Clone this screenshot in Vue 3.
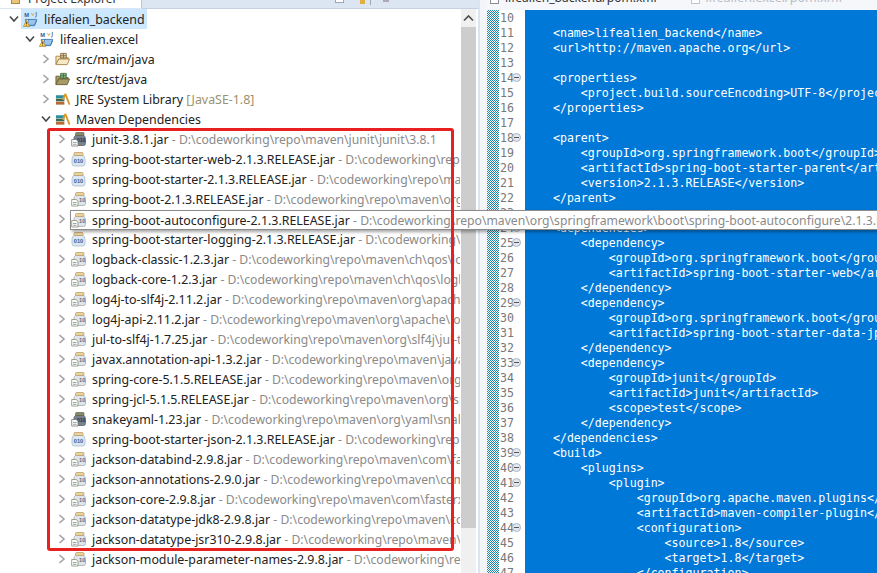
<script setup>
const P = 'D:\\codeworking\\repo\\maven\\'
const tree = [
  { depth: 0, open: true, icon: 'project', name: 'lifealien_backend', selected: true },
  { depth: 1, open: true, icon: 'project', name: 'lifealien.excel' },
  { depth: 2, icon: 'srcMain', name: 'src/main/java' },
  { depth: 2, icon: 'srcTest', name: 'src/test/java' },
  { depth: 2, icon: 'library', name: 'JRE System Library', tag: '[JavaSE-1.8]' },
  { depth: 2, open: true, icon: 'library', name: 'Maven Dependencies' },
  ...[
    ['dark', 'junit-3.8.1.jar', 'junit\\junit\\3.8.1'],
    ['plain', 'spring-boot-starter-web-2.1.3.RELEASE.jar', 'org\\springframework\\boot'],
    ['plain', 'spring-boot-starter-2.1.3.RELEASE.jar', 'org\\springframework\\boot'],
    ['page', 'spring-boot-2.1.3.RELEASE.jar', 'org\\springframework\\boot'],
    ['page', 'spring-boot-autoconfigure-2.1.3.RELEASE.jar', 'org\\springframework\\boot'],
    ['plain', 'spring-boot-starter-logging-2.1.3.RELEASE.jar', 'org\\springframework\\boot'],
    ['page', 'logback-classic-1.2.3.jar', 'ch\\qos\\logback'],
    ['page', 'logback-core-1.2.3.jar', 'ch\\qos\\logback'],
    ['page', 'log4j-to-slf4j-2.11.2.jar', 'org\\apache\\logging'],
    ['page', 'log4j-api-2.11.2.jar', 'org\\apache\\logging'],
    ['page', 'jul-to-slf4j-1.7.25.jar', 'org\\slf4j\\jul-to-slf4j'],
    ['page', 'javax.annotation-api-1.3.2.jar', 'javax\\annotation'],
    ['page', 'spring-core-5.1.5.RELEASE.jar', 'org\\springframework'],
    ['page', 'spring-jcl-5.1.5.RELEASE.jar', 'org\\springframework'],
    ['dark', 'snakeyaml-1.23.jar', 'org\\yaml\\snakeyaml'],
    ['plain', 'spring-boot-starter-json-2.1.3.RELEASE.jar', 'org\\springframework\\boot'],
    ['page', 'jackson-databind-2.9.8.jar', 'com\\fasterxml\\jackson'],
    ['page', 'jackson-annotations-2.9.0.jar', 'com\\fasterxml\\jackson'],
    ['page', 'jackson-core-2.9.8.jar', 'com\\fasterxml\\jackson'],
    ['page', 'jackson-datatype-jdk8-2.9.8.jar', 'com\\fasterxml\\jackson'],
    ['page', 'jackson-datatype-jsr310-2.9.8.jar', 'com\\fasterxml\\jackson'],
    ['page', 'jackson-module-parameter-names-2.9.8.jar', 'com\\fasterxml\\jackson'],
  ].map(([icon, name, path]) => ({ depth: 3, icon, name, path: P + path })),
]

const code = [
  [10, ''],
  [11, '    <name>lifealien_backend</name>'],
  [12, '    <url>http://maven.apache.org</url>'],
  [13, ''],
  [14, '    <properties>', true],
  [15, '        <project.build.sourceEncoding>UTF-8</project.build.sourceEncoding>'],
  [16, '    </properties>'],
  [17, ''],
  [18, '    <parent>', true],
  [19, '        <groupId>org.springframework.boot</groupId>'],
  [20, '        <artifactId>spring-boot-starter-parent</artifactId>'],
  [21, '        <version>2.1.3.RELEASE</version>'],
  [22, '    </parent>'],
  [23, ''],
  [24, '    <dependencies>', true],
  [25, '        <dependency>', true],
  [26, '            <groupId>org.springframework.boot</groupId>'],
  [27, '            <artifactId>spring-boot-starter-web</artifactId>'],
  [28, '        </dependency>'],
  [29, '        <dependency>', true],
  [30, '            <groupId>org.springframework.boot</groupId>'],
  [31, '            <artifactId>spring-boot-starter-data-jpa</artifactId>'],
  [32, '        </dependency>'],
  [33, '        <dependency>', true],
  [34, '            <groupId>junit</groupId>'],
  [35, '            <artifactId>junit</artifactId>'],
  [36, '            <scope>test</scope>'],
  [37, '        </dependency>'],
  [38, '    </dependencies>'],
  [39, '    <build>', true],
  [40, '        <plugins>', true],
  [41, '            <plugin>', true],
  [42, '                <groupId>org.apache.maven.plugins</groupId>'],
  [43, '                <artifactId>maven-compiler-plugin</artifactId>'],
  [44, '                <configuration>', true],
  [45, '                    <source>1.8</source>'],
  [46, '                    <target>1.8</target>'],
  [47, '                </configuration>'],
].map(([n, text, fold]) => ({ n, text, fold }))
</script>

<template>
  <div class="root">
    <svg class="defs" width="0" height="0" aria-hidden="true">
      <defs>
        <symbol id="i-chevron-r" viewBox="0 0 10 10">
          <path d="M2.5 1 L7 5 L2.5 9" fill="none" stroke="#a3a3a3" stroke-width="1.6" />
        </symbol>
        <symbol id="i-chevron-d" viewBox="0 0 10 10">
          <path d="M1 2.5 L5 7 L9 2.5" fill="none" stroke="#4a4a4a" stroke-width="1.6" />
        </symbol>
        <symbol id="i-project" viewBox="0 0 16 18">
          <path d="M2 9.5 H7 L8 11 H15 L12.5 16.5 H3.5 Z" fill="#e8f1fb" stroke="#3f79b5" />
          <path d="M6 9.5 H15 L12.5 16 H4 Z" fill="#9cc3ea" stroke="#3f79b5" />
          <text x="1" y="6.5" class="m">M</text>
          <path d="M9 2.5 L10.5 5 L12 2.5" fill="none" stroke="#d99a2b" stroke-width="1" />
          <path d="M14.5 1 V6 Q14.5 7 13 7" fill="none" stroke="#3f79b5" stroke-width="1" />
          <path d="M3.5 10.5 L7 17.5 H0 Z" fill="#f6cf55" stroke="#a8791c" stroke-width=".7" />
          <path d="M3.5 12.5 V15 M3.5 16 V16.8" stroke="#59400f" stroke-width="1" />
        </symbol>
        <symbol id="i-srcMain" viewBox="0 0 16 14">
          <path d="M1 12.5 V4 H5 L6 5.5 H14 V7 H4 Z" fill="#f6e3b2" stroke="#a98a4e" />
          <path d="M1 13 L4 7 H15.5 L13 13 Z" fill="#f8e9c4" stroke="#a98a4e" />
          <path d="M6 1 H12 V6 H6 Z M9 1 V6 M6 3.5 H12" fill="#e6cfa0" stroke="#7d6a44" stroke-width=".9" />
        </symbol>
        <symbol id="i-srcTest" viewBox="0 0 16 14">
          <path d="M1 12.5 V4 H5 L6 5.5 H14 V7 H4 Z" fill="#a89a66" stroke="#6d6238" />
          <path d="M1 13 L4 7 H15.5 L13 13 Z" fill="#a89a66" stroke="#6d6238" />
          <path d="M6 1 H12 V6 H6 Z M9 1 V6 M6 3.5 H12" fill="#90b67a" stroke="#3b6e46" stroke-width=".9" />
        </symbol>
        <symbol id="i-library" viewBox="0 0 16 14">
          <rect x="1" y="3" width="9" height="3" fill="#2f8f9e" />
          <rect x="1" y="6.5" width="9" height="3" fill="#3d6b52" />
          <rect x="1" y="10" width="9" height="3" fill="#b56a35" />
          <path d="M11 1.5 L15.5 13 M11 1.5 L8.5 8" stroke="#d99a2b" stroke-width="2" fill="none" />
        </symbol>
        <symbol id="i-plain" viewBox="0 0 15 15">
          <path d="M3 3.5 H12 Q14 5 14 8 V12 Q14 14.5 11.5 14.5 H3.5 Q1 14.5 1 12 V8 Q1 5 3 3.5 Z" fill="#dbe7f3" stroke="#a9b9c9" stroke-width=".8" />
          <rect x="3" y="1" width="9" height="3" rx="1" fill="#ecd29a" stroke="#b09a66" stroke-width=".7" />
          <text x="7.5" y="11.6" class="bin big" fill="#2d5d93">010</text>
        </symbol>
        <symbol id="i-page" viewBox="0 0 15 15">
          <path d="M5 3.5 H12.5 Q14.5 5 14.5 8 V12 Q14.5 14 12.5 14 H5 Q3 14 3 12 V6 Q3 5 5 3.5 Z" fill="#dfe5e8" stroke="#a4acb0" stroke-width=".8" />
          <rect x="4.5" y="1" width="8.5" height="3" rx="1" fill="#ecd29a" stroke="#b09a66" stroke-width=".7" />
          <text x="11.2" y="10.8" class="bin big" fill="#55748f">10</text>
          <path d="M.7 8 H5 L7 9.6 V14.5 H.7 Z" fill="#fffdf4" stroke="#8e8c78" stroke-width=".8" />
          <path d="M2 11 H5.5 M2 12.8 H5.5" stroke="#6b94b5" stroke-width=".8" />
        </symbol>
        <symbol id="i-dark" viewBox="0 0 15 15">
          <path d="M5 3.5 H12.5 Q14.5 5 14.5 8 V12 Q14.5 14 12.5 14 H5 Q3 14 3 12 V6 Q3 5 5 3.5 Z" fill="#79838b" stroke="#5b6369" stroke-width=".8" />
          <rect x="4.5" y="1" width="8.5" height="3" rx="1" fill="#8b8a6d" stroke="#5f5e45" stroke-width=".7" />
          <text x="10.2" y="10.8" class="bin" fill="#14355c">010</text>
          <path d="M.7 8 H5 L7 9.6 V14.5 H.7 Z" fill="#fffdf4" stroke="#777" stroke-width=".8" />
          <path d="M2 11 H5.5 M2 12.8 H5.5" stroke="#6b94b5" stroke-width=".8" />
        </symbol>
      </defs>
    </svg>

    <section class="left">
      <header class="left-top">
        <div class="tab">
          <i class="tab-ico"></i>
          <span class="tab-text">Project Explorer</span>
        </div>
        <div class="tab-band">
          <i class="tool box"></i>
          <i class="tool pen"></i>
          <i class="tool sep"></i>
          <i class="tool dot"></i>
        </div>
      </header>
      <div class="left-body">
        <div class="tree">
          <div v-for="row in tree" :key="row.name" class="row" :class="'d' + row.depth">
            <svg class="chev"><use :href="row.open ? '#i-chevron-d' : '#i-chevron-r'" /></svg>
            <div class="cell" :class="{ selected: row.selected }">
              <svg class="ico"><use :href="'#i-' + row.icon" /></svg>
              <span class="name">{{ row.name }}</span>
              <span v-if="row.tag" class="tag">&nbsp;{{ row.tag }}</span>
              <span v-if="row.path" class="dim">&nbsp;- {{ row.path }}</span>
            </div>
          </div>
        </div>
        <div class="scrollbar">
          <div class="sb-btn">
            <svg width="11" height="8" viewBox="0 0 11 8"><path d="M1 6.5 L5.5 2 L10 6.5" fill="none" stroke="#505050" stroke-width="1.7" /></svg>
          </div>
          <div class="sb-thumb"></div>
        </div>
      </div>
    </section>

    <div class="gutter"></div>

    <section class="editor">
      <header class="editor-top">
        <i class="etab-ico"></i>
        <span class="etab">lifealien_backend/pom.xml</span>
        <i class="etab-ico second"></i>
        <span class="etab faint">lifealien.excel/pom.xml</span>
      </header>
      <div class="editor-body">
        <div class="hatch"></div>
        <div class="numbers">
          <div v-for="line in code" :key="line.n" class="num">
            <span>{{ line.n }}</span>
            <i v-if="line.fold" class="fold"></i>
          </div>
        </div>
        <pre class="code"><div v-for="line in code" :key="line.n" class="line">{{ line.text || ' ' }}</div></pre>
      </div>
    </section>

    <div class="tooltip">
      <svg class="ico"><use href="#i-page" /></svg>
      <span class="name">spring-boot-autoconfigure-2.1.3.RELEASE.jar</span>
      <span class="dim">&nbsp;- D:\codeworking\repo\maven\org\springframework\boot\spring-boot-autoconfigure\2.1.3.RELEASE</span>
    </div>
    <div class="redbox"></div>
  </div>
</template>

<style scoped>
.root {
  position: relative;
  display: flex;
  width: 877px;
  height: 573px;
  overflow: hidden;
  background: #fff;
  font-family: "Noto Sans", "Noto Sans CJK SC", sans-serif;
  font-size: 12.4px;
  color: #222;
}
.defs { position: absolute; }
.m { font: 700 6.5px "Liberation Sans", sans-serif; fill: #2a5d92; }
.bin { font: 700 5px "Liberation Sans", sans-serif; text-anchor: middle; }
.bin.big { font-size: 5.6px; }

.left {
  width: 478px;
  flex: none;
  display: flex;
  flex-direction: column;
}
.left-top {
  height: 9px;
  display: flex;
  flex: none;
  overflow: hidden;
  background: #dce6f3;
}
.tab {
  width: 142px;
  height: 8px;
  padding-left: 11px;
  box-sizing: border-box;
  display: flex;
  background: #fff;
  border-right: 1px solid #b9c6d8;
}
.tab-ico {
  width: 9px;
  height: 4px;
  background: #e8c77a;
  border: 1px solid #a98a4e;
  border-top: none;
  box-sizing: border-box;
}
.tab-text {
  margin-left: 8px;
  margin-top: -1px;
  font-size: 12px;
  line-height: 0;
  color: #333;
}
.tab-band {
  flex: 1;
  display: flex;
  align-items: flex-start;
  padding-left: 193px;
  border-bottom: 1px solid #c5d1e0;
}
.tool { display: block; flex: none; }
.tool.box { width: 9px; height: 3px; background: #fff; border: 1px solid #9aa7b6; border-top: none; box-sizing: border-box; }
.tool.pen { width: 5px; height: 4px; margin-left: 16px; background: #e0b040; }
.tool.sep { width: 1px; height: 5px; margin-left: 5px; background: #9aa7b6; }
.tool.dot { width: 6px; height: 2px; margin-left: 12px; background: #aab; }

.left-body {
  flex: 1;
  display: flex;
  min-height: 0;
}
.tree {
  width: 460px;
  margin-right: 1px;
  flex: none;
  overflow: hidden;
}
.row {
  display: flex;
  align-items: center;
  height: 20px;
  white-space: nowrap;
}
.d0 { padding-left: 9px; }
.d1 { padding-left: 25px; }
.d2 { padding-left: 41px; }
.d3 { padding-left: 57px; }
.chev {
  width: 10px;
  height: 10px;
  flex: none;
  margin-right: 2px;
}
.cell {
  display: flex;
  align-items: center;
  height: 20px;
  padding: 0 2px;
}
.cell.selected { background: #cce8ff; }
.ico {
  width: 15px;
  height: 16px;
  flex: none;
  margin-right: 6px;
}
.name { color: #222; }
.dim { color: #8a8a8a; font-size: 12.2px; }
.tag { color: #9b9270; }
.scrollbar {
  width: 15px;
  flex: none;
  display: flex;
  flex-direction: column;
  background: #f0f0f0;
}
.sb-btn {
  height: 18px;
  display: flex;
  align-items: center;
  justify-content: center;
}
.sb-thumb {
  height: 501px;
  background: #cdcdcd;
}

.gutter {
  width: 9px;
  flex: none;
  background: #f3f5fb;
  border-left: 2px solid #dbe4f0;
  box-sizing: border-box;
}

.editor {
  flex: 1;
  min-width: 0;
  display: flex;
  flex-direction: column;
}
.editor-top {
  height: 10px;
  flex: none;
  display: flex;
  align-items: flex-start;
  padding-left: 3px;
  overflow: hidden;
  background: #f5f7fb;
  font-size: 12px;
  line-height: 0;
}
.etab-ico {
  width: 9px;
  height: 4px;
  flex: none;
  background: #fff;
  border: 1px solid #8d8d8d;
  border-top: none;
  box-sizing: border-box;
}
.etab-ico.second { margin-left: 34px; border-color: #c4c4c4; }
.etab {
  margin-left: 6px;
  margin-top: -2px;
  color: #333;
}
.etab.faint { color: #b9bdc6; font-size: 12.6px; }
.editor-body {
  flex: 1;
  display: flex;
  min-height: 0;
  overflow: hidden;
}
.hatch {
  width: 12px;
  flex: none;
  background: repeating-conic-gradient(#1b87a8 0 25%, #fff 0 50%) 0 0 / 2px 2px;
}
.numbers {
  width: 25px;
  padding: 1px 0 0 1px;
  flex: none;
  background: #fff;
  font: 11.6px/15px "DejaVu Sans Mono", monospace;
  color: #787878;
}
.num {
  position: relative;
  height: 15px;
}
.fold {
  position: absolute;
  left: 12px;
  top: 2px;
  width: 7px;
  height: 7px;
  border: 1px solid #a9b4c4;
  border-radius: 50%;
  background: linear-gradient(#555, #555) center / 5px 1px no-repeat, #e3e8ef;
}
.code {
  flex: 1;
  min-width: 0;
  margin: 0;
  padding-top: 1px;
  overflow: hidden;
  background: #0078d7;
  color: #fff;
  font: 11.6px/15px "DejaVu Sans Mono", monospace;
}
.line {
  height: 15px;
  white-space: pre;
}

.tooltip {
  position: absolute;
  left: 70px;
  top: 210px;
  width: 820px;
  height: 20px;
  box-sizing: border-box;
  display: flex;
  align-items: center;
  white-space: nowrap;
  background: #fff;
  border: 1px solid #8c8c8c;
  box-shadow: 2px 2px 3px rgba(0, 0, 0, .35);
}
.redbox {
  position: absolute;
  left: 47px;
  top: 128px;
  width: 407px;
  height: 423px;
  box-sizing: border-box;
  border: 3px solid #e8201f;
  border-radius: 3px;
}
</style>
